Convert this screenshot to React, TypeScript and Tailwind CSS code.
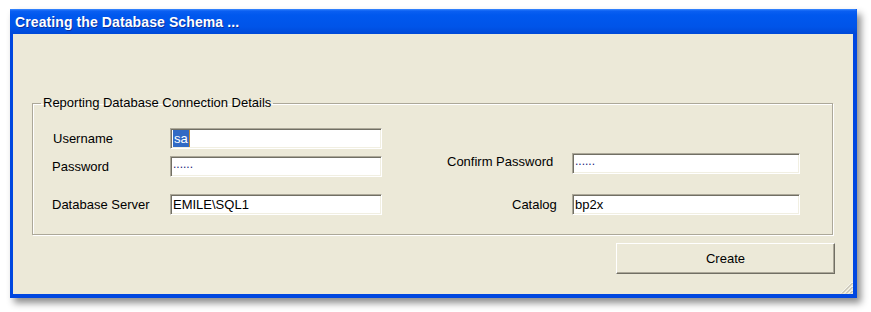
import React from "react";

const font = { fontFamily: '"Liberation Sans", Arial, sans-serif' };

function Field({ width, children }: { width: string; children?: React.ReactNode }) {
  return (
    <div
      className={`${width} h-[21px] bg-white border border-t-[#ACA899] border-l-[#ACA899] border-b-white border-r-white shadow-[inset_1px_1px_0_#716F64,inset_-1px_-1px_0_#F1EFE2] flex items-center pl-[2px] text-[13px] text-black leading-none`}
    >
      {children}
    </div>
  );
}

function Dots() {
  return <span className="text-[#1c1c7a] text-[12px] tracking-[0px] -mt-[5px]">......</span>;
}

export default function App() {
  return (
    <div className="w-[871px] h-[312px] bg-white pt-[9px] pl-[10px]" style={font}>
      <div className="w-[847px] h-[289px] flex flex-col bg-[#0047E0] shadow-[4px_5px_7px_rgba(0,0,0,0.45)]">
        {/* title bar */}
        <div className="h-[25px] shrink-0 flex items-center pl-[5px] pt-[2px] bg-[linear-gradient(180deg,#3D8BFF_0px,#0A5FF2_2px,#0058EE_6px,#0054E8_18px,#0049D8_25px)] rounded-tr-[2px]">
          <span className="text-white font-bold text-[14px] tracking-[0.1px] [text-shadow:1px_1px_0_#0A2F9E]">
            Creating the Database Schema ...
          </span>
        </div>

        {/* body */}
        <div className="flex-1 ml-[3px] mr-[4px] mb-[4px] bg-[#ECE9D8] flex flex-col pt-[61px] text-[13px] text-black">
          <fieldset className="ml-[19px] w-[801px] h-[140px] border border-[#ACA899] shadow-[1px_1px_0_#fff,inset_1px_1px_0_#fff] px-0 pt-0 flex">
            <legend className="ml-[8px] px-[2px] leading-[16px]">Reporting Database Connection Details</legend>
            <div className="flex w-full -mt-[6px]">
              {/* left column */}
              <div className="flex flex-col pt-[23px] pl-[19px]">
                <div className="flex items-center">
                  <span className="w-[118px] pl-[1px]">Username</span>
                  <Field width="w-[212px]">
                    <span className="bg-[#316AC5] text-white px-[1px] h-[17px] flex items-center">sa</span>
                    <span className="w-[1px] h-[17px] bg-[#C58A31]" />
                  </Field>
                </div>
                <div className="flex items-center mt-[7px]">
                  <span className="w-[118px]">Password</span>
                  <Field width="w-[212px]">
                    <Dots />
                  </Field>
                </div>
                <div className="flex items-center mt-[17px]">
                  <span className="w-[118px]">Database Server</span>
                  <Field width="w-[212px]">EMILE\SQL1</Field>
                </div>
              </div>

              {/* right column */}
              <div className="flex flex-col pt-[48px] pl-[65px]">
                <div className="flex items-center">
                  <span className="w-[125px] -mt-[4px]">Confirm Password</span>
                  <Field width="w-[228px]">
                    <Dots />
                  </Field>
                </div>
                <div className="flex items-center mt-[20px]">
                  <span className="w-[125px] pl-[65px]">Catalog</span>
                  <Field width="w-[228px]">bp2x</Field>
                </div>
              </div>
            </div>
          </fieldset>

          <div className="flex justify-end pr-[18px] mt-[8px]">
            <button className="w-[219px] h-[31px] bg-[#ECE9D8] border border-t-white border-l-white border-b-[#716F64] border-r-[#716F64] shadow-[inset_-1px_-1px_0_#ACA899] text-[13px] text-black pt-[1px]">
              Create
            </button>
          </div>

          <div className="flex justify-end mt-auto">
            <svg width="13" height="13" viewBox="0 0 13 13">
              <g strokeWidth="1">
                <line x1="12.5" y1="1" x2="1" y2="12.5" stroke="#fff" />
                <line x1="12.5" y1="2" x2="2" y2="12.5" stroke="#ACA899" />
                <line x1="12.5" y1="5" x2="5" y2="12.5" stroke="#fff" />
                <line x1="12.5" y1="6" x2="6" y2="12.5" stroke="#ACA899" />
                <line x1="12.5" y1="9" x2="9" y2="12.5" stroke="#fff" />
                <line x1="12.5" y1="10" x2="10" y2="12.5" stroke="#ACA899" />
              </g>
            </svg>
          </div>
        </div>
      </div>
    </div>
  );
}
